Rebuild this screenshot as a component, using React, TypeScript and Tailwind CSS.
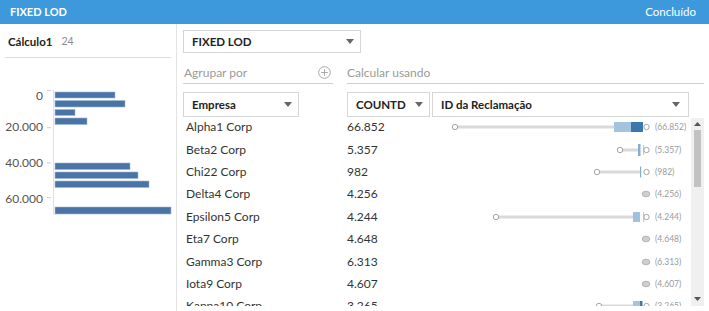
import React from "react";

type Viz = {
  left?: number;
  lineEnd?: number;
  boxes?: [number, number, string, number][];
  ticks?: [number, string, number][];
  pill?: boolean;
  label: string;
};

const rows: { name: string; value: string; viz: Viz }[] = [
  {
    name: "Alpha1 Corp",
    value: "66.852",
    viz: {
      left: 455,
      lineEnd: 614,
      boxes: [
        [614, 631, "#a3c3df", 10],
        [631, 643, "#3b78ae", 10],
      ],
      label: "(66.852)",
    },
  },
  {
    name: "Beta2 Corp",
    value: "5.357",
    viz: {
      left: 620,
      lineEnd: 638,
      boxes: [[638, 640.5, "#86aed3", 12]],
      ticks: [[643, "#b7cfe5", 10]],
      label: "(5.357)",
    },
  },
  {
    name: "Chi22 Corp",
    value: "982",
    viz: { left: 597, lineEnd: 640, ticks: [[640, "#86aed3", 11]], label: "(982)" },
  },
  { name: "Delta4 Corp", value: "4.256", viz: { pill: true, label: "(4.256)" } },
  {
    name: "Epsilon5 Corp",
    value: "4.244",
    viz: {
      left: 496,
      lineEnd: 633,
      boxes: [[633, 640, "#9fc0de", 10]],
      ticks: [[643, "#b7cfe5", 10]],
      label: "(4.244)",
    },
  },
  { name: "Eta7 Corp", value: "4.648", viz: { pill: true, label: "(4.648)" } },
  { name: "Gamma3 Corp", value: "6.313", viz: { pill: true, label: "(6.313)" } },
  { name: "Iota9 Corp", value: "4.607", viz: { pill: true, label: "(4.607)" } },
  {
    name: "Kappa10 Corp",
    value: "3.265",
    viz: {
      left: 599,
      lineEnd: 633,
      boxes: [
        [633, 640, "#a3c3df", 10],
        [640, 642.5, "#3b78ae", 10],
      ],
      label: "(3.265)",
    },
  },
];

// histogram on the left, page coords
const bars = [
  [92, 60, 6],
  [100.5, 70, 6.5],
  [109.5, 20, 6],
  [118, 32, 6.5],
  [163, 75, 6.5],
  [172, 83, 6.5],
  [181, 94, 6.5],
  [207, 116, 7],
];

const axis = [
  { label: "0", y: 96, tick: 90.5 },
  { label: "20.000", y: 126.7, tick: 127.7 },
  { label: "40.000", y: 162.5, tick: 163 },
  { label: "60.000", y: 198.5, tick: 197.7 },
];

function Caret() {
  return (
    <svg width="8" height="5" viewBox="0 0 8 5">
      <path d="M0 0 L8 0 L4 5 Z" fill="#666" />
    </svg>
  );
}

function RangeViz({ viz }: { viz: Viz }) {
  const o = 432;
  const cy = 11;
  return (
    <svg width="259" height="22" viewBox="0 0 259 22">
      {viz.left !== undefined && viz.lineEnd !== undefined && (
        <line x1={viz.left - o} y1={cy} x2={viz.lineEnd - o} y2={cy} stroke="#d9d9d9" strokeWidth="3" />
      )}
      {viz.boxes?.map(([x1, x2, c, h], i) => (
        <rect key={i} x={x1 - o} y={cy - h / 2} width={x2 - x1} height={h} fill={c} />
      ))}
      {viz.ticks?.map(([x, c, h], i) => (
        <rect key={i} x={x - o} y={cy - h / 2} width="1.2" height={h} fill={c} />
      ))}
      {viz.left !== undefined && (
        <circle cx={viz.left - o} cy={cy} r="2.7" fill="#fff" stroke="#a5a5a5" strokeWidth="1" />
      )}
      {viz.pill ? (
        <ellipse cx={646 - o} cy={cy} rx="3.8" ry="2.8" fill="#cfcfcf" stroke="#a8a8a8" strokeWidth="0.8" />
      ) : (
        <circle cx={646.5 - o} cy={cy} r="2.7" fill="#fff" stroke="#a5a5a5" strokeWidth="1" />
      )}
      <text x={655 - o} y={cy + 3} fontSize="8.5" fill="#9a9a9a" fontFamily="Lato, sans-serif">
        {viz.label}
      </text>
    </svg>
  );
}

export default function App() {
  return (
    <div className="w-[709px] h-[311px] overflow-hidden bg-white flex flex-col font-['Lato',sans-serif] text-[#333]">
      {/* title bar */}
      <div className="h-[24px] shrink-0 bg-[#3d99dc] flex items-center justify-between pl-[10px] pr-[13px] text-white">
        <span className="text-[11px] font-bold">FIXED LOD</span>
        <span className="text-[11.5px]">Concluído</span>
      </div>

      <div className="flex flex-1 min-h-0">
        {/* left: calc summary */}
        <div className="w-[177px] shrink-0 border-r border-[#e3e3e3]">
          <div className="mx-[5px] h-[34px] pt-[3px] border-b border-[#dcdcdc] flex items-center gap-[9px] pl-[3px]">
            <span className="text-[11.5px] font-bold text-[#222]">Cálculo1</span>
            <span className="text-[10.5px] text-[#8a8a8a]">24</span>
          </div>
          <svg width="176" height="170" viewBox="0 58 176 170">
            <line x1="53.5" y1="90" x2="53.5" y2="215" stroke="#e2e2e2" strokeWidth="1" />
            {axis.map((a) => (
              <g key={a.label}>
                <line x1="47" y1={a.tick} x2="51" y2={a.tick} stroke="#cfcfcf" strokeWidth="1" />
                <text x="43" y={a.y + 4} textAnchor="end" fontSize="12" fill="#555" fontFamily="Lato, sans-serif">
                  {a.label}
                </text>
              </g>
            ))}
            {bars.map(([y, w, h], i) => (
              <rect key={i} x="55" y={y} width={w} height={h} fill="#4a73a6" stroke="#9db7d6" strokeWidth="0.6" />
            ))}
          </svg>
        </div>

        {/* right: editor */}
        <div className="flex-1 min-w-0 pl-[6px] pr-[5px] flex flex-col">
          <div className="mt-[6px] w-[178px] h-[23px] border border-[#d6d6d6] flex items-center justify-between pl-[8px] pr-[6px]">
            <span className="text-[11.5px] font-bold text-[#222]">FIXED LOD</span>
            <Caret />
          </div>

          <div className="mt-[9px] flex gap-[14px] h-[22px]">
            <div className="w-[150px] border-b border-[#cfcfcf] flex items-center justify-between pl-[1px] pr-[2px]">
              <span className="text-[12px] text-[#9a9a9a]">Agrupar por</span>
              <svg width="13" height="13" viewBox="0 0 13 13">
                <circle cx="6.5" cy="6.5" r="5.8" fill="none" stroke="#a8a8a8" strokeWidth="1" />
                <path d="M6.5 3.2 V9.8 M3.2 6.5 H9.8" stroke="#a8a8a8" strokeWidth="1" />
              </svg>
            </div>
            <div className="flex-1 border-b border-[#cfcfcf] flex items-center">
              <span className="text-[12px] text-[#9a9a9a]">Calcular usando</span>
            </div>
          </div>

          <div className="mt-[8px] flex h-[25px] shrink-0">
            <div className="w-[116px] border border-[#d6d6d6] flex items-center justify-between pl-[8px] pr-[6px]">
              <span className="text-[11.5px] font-bold text-[#222]">Empresa</span>
              <Caret />
            </div>
            <div className="ml-[48px] w-[83px] border border-[#d6d6d6] flex items-center justify-between pl-[8px] pr-[6px]">
              <span className="text-[11.5px] font-bold text-[#222]">COUNTD</span>
              <Caret />
            </div>
            <div className="ml-[2px] w-[257px] border border-[#d6d6d6] flex items-center justify-between pl-[8px] pr-[8px]">
              <span className="text-[11.5px] font-bold text-[#222]">ID da Reclamação</span>
              <Caret />
            </div>
          </div>

          <div className="flex h-[189px] shrink-0">
            <div className="w-[508px] h-[189px] overflow-hidden">
              <div className="-mt-[1px]">
                {rows.map((r) => (
                  <div key={r.name} className="h-[22.4px] flex items-center text-[12px]">
                    <div className="w-[164px] pl-[3px]">{r.name}</div>
                    <div className="w-[85px]">{r.value}</div>
                    <div className="w-[259px] flex items-center">
                      <RangeViz viz={r.viz} />
                    </div>
                  </div>
                ))}
              </div>
            </div>
            {/* scrollbar */}
            <div className="w-[13px] mt-[1px] bg-[#f0f0f0] flex flex-col items-center">
              <div className="h-[12px] flex items-center">
                <svg width="7" height="4" viewBox="0 0 7 4">
                  <path d="M0 4 L7 4 L3.5 0 Z" fill="#555" />
                </svg>
              </div>
              <div className="w-[7px] h-[57px] bg-[#c2c2c2]" />
              <div className="flex-1" />
              <div className="h-[12px] mb-[1px] flex items-center">
                <svg width="7" height="4" viewBox="0 0 7 4">
                  <path d="M0 0 L7 0 L3.5 4 Z" fill="#555" />
                </svg>
              </div>
            </div>
          </div>
        </div>
      </div>
    </div>
  );
}
